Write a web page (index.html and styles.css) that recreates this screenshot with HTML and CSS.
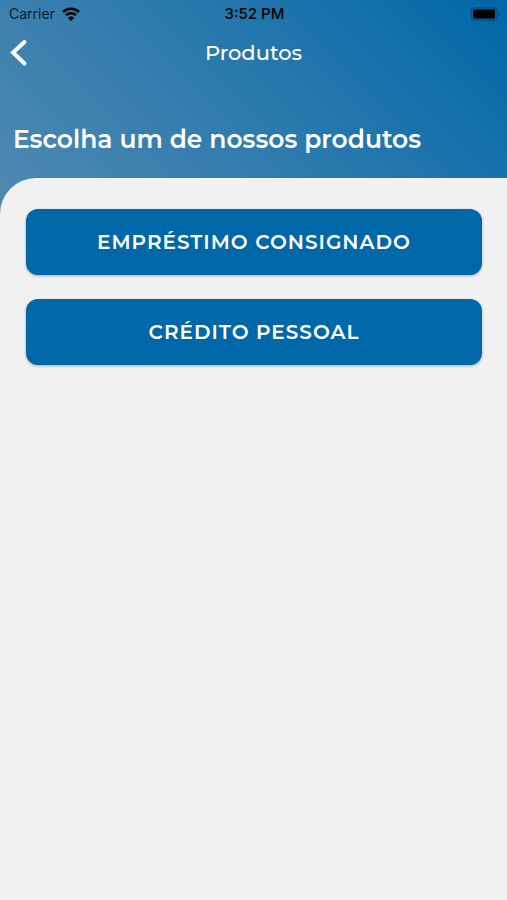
FILE: index.html
```html
<!DOCTYPE html>
<html lang="pt-BR">
<head>
    <meta charset="UTF-8">
    <meta name="viewport" content="width=device-width, initial-scale=1.0">
    <title>Produtos</title>
    <link rel="stylesheet" href="styles.css">
</head>
<body>
    <header class="header">
        <div class="status-bar">
            <div class="carrier">
                <span>Carrier</span>
                <svg width="18" height="14" viewBox="0 0 18 14" aria-hidden="true">
                    <path d="M1 5a11.6 11.6 0 0 1 16 0M4 8.200a7.300 7.300 0 0 1 10 0" fill="none" stroke="#000" stroke-width="2.500"/>
                    <path d="M9 14L5.900 10.900a4.400 4.400 0 0 1 6.200 0z"/>
                </svg>
            </div>
            <span class="time">3:52 PM</span>
            <div class="battery">
                <svg width="30" height="14" viewBox="0 0 30 14" aria-hidden="true">
                    <rect x="1" y="1" width="26" height="12" rx="3.500" fill="none" stroke="#000" stroke-opacity=".35"/>
                    <rect x="3" y="2.500" width="22" height="9" rx="1.500"/>
                    <path d="M28.500 5v4q1.300-.5 1.300-2t-1.300-2z" fill-opacity=".35"/>
                </svg>
            </div>
        </div>
        <nav class="nav-bar">
            <button class="back" type="button" aria-label="Voltar">
                <svg width="18" height="28" viewBox="0 0 18 28" aria-hidden="true">
                    <path d="M14.500 3L3 13.500l11.500 11" fill="none" stroke="#fff" stroke-width="4" stroke-linecap="round" stroke-linejoin="miter"/>
                </svg>
            </button>
            <h1 class="title">Produtos</h1>
        </nav>
        <h2 class="subtitle">Escolha um de nossos produtos</h2>
    </header>
    <main class="content">
        <button class="product" type="button">EMPRÉSTIMO CONSIGNADO</button>
        <button class="product" type="button">CRÉDITO PESSOAL</button>
    </main>
</body>
</html>
```

FILE: styles.css
```css
* {
    box-sizing: border-box;
}
body {
    display: flex;
    flex-direction: column;
    min-height: 100vh;
    margin: 0;
    background: #f1f1f1;
    font-family: Montserrat, Inter, sans-serif;
}
.header {
    padding-bottom: 57px;
    background: linear-gradient(45deg, #5089b1, #2c7aad 50%, #0067a8);
    color: #fff;
}
.status-bar {
    display: grid;
    grid-template-columns: 1fr auto 1fr;
    align-items: center;
    height: 27px;
    padding: 0 7px 0 9px;
    color: #000;
    font-family: Inter, sans-serif;
    font-size: 15px;
}
.carrier {
    display: flex;
    align-items: center;
    gap: 7px;
    color: #06202f;
    font-size: 14px;
}
.time {
    font-weight: 500;
}
.battery {
    display: flex;
    justify-content: flex-end;
}
.nav-bar {
    display: grid;
    grid-template-columns: 48px 1fr 48px;
    align-items: center;
    height: 51px;
}
.back {
    display: flex;
    padding: 0 10px;
    border: 0;
    background: none;
    cursor: pointer;
}
.title {
    margin: 0;
    text-align: center;
    font-size: 21px;
    font-weight: 500;
    line-height: 28px;
}
.subtitle {
    margin: 43px 13px 0;
    font-size: 25px;
    font-weight: 600;
    line-height: 36px;
}
/* sobe por cima do header para mostrar o canto arredondado */
.content {
    display: flex;
    flex: 1;
    flex-direction: column;
    gap: 24px;
    margin-top: -36px;
    padding: 31px 25px 31px 26px;
    border-top-left-radius: 36px;
    background: #f1f1f1;
}
.product {
    padding: 18px;
    border: 0;
    border-radius: 12px;
    background: #0067a8;
    box-shadow: 0 1px 3px rgba(0, 0, 0, 0.3);
    color: #fff;
    font-family: inherit;
    font-size: 20px;
    font-weight: 600;
    letter-spacing: 1px;
    line-height: 30px;
    cursor: pointer;
}
```
